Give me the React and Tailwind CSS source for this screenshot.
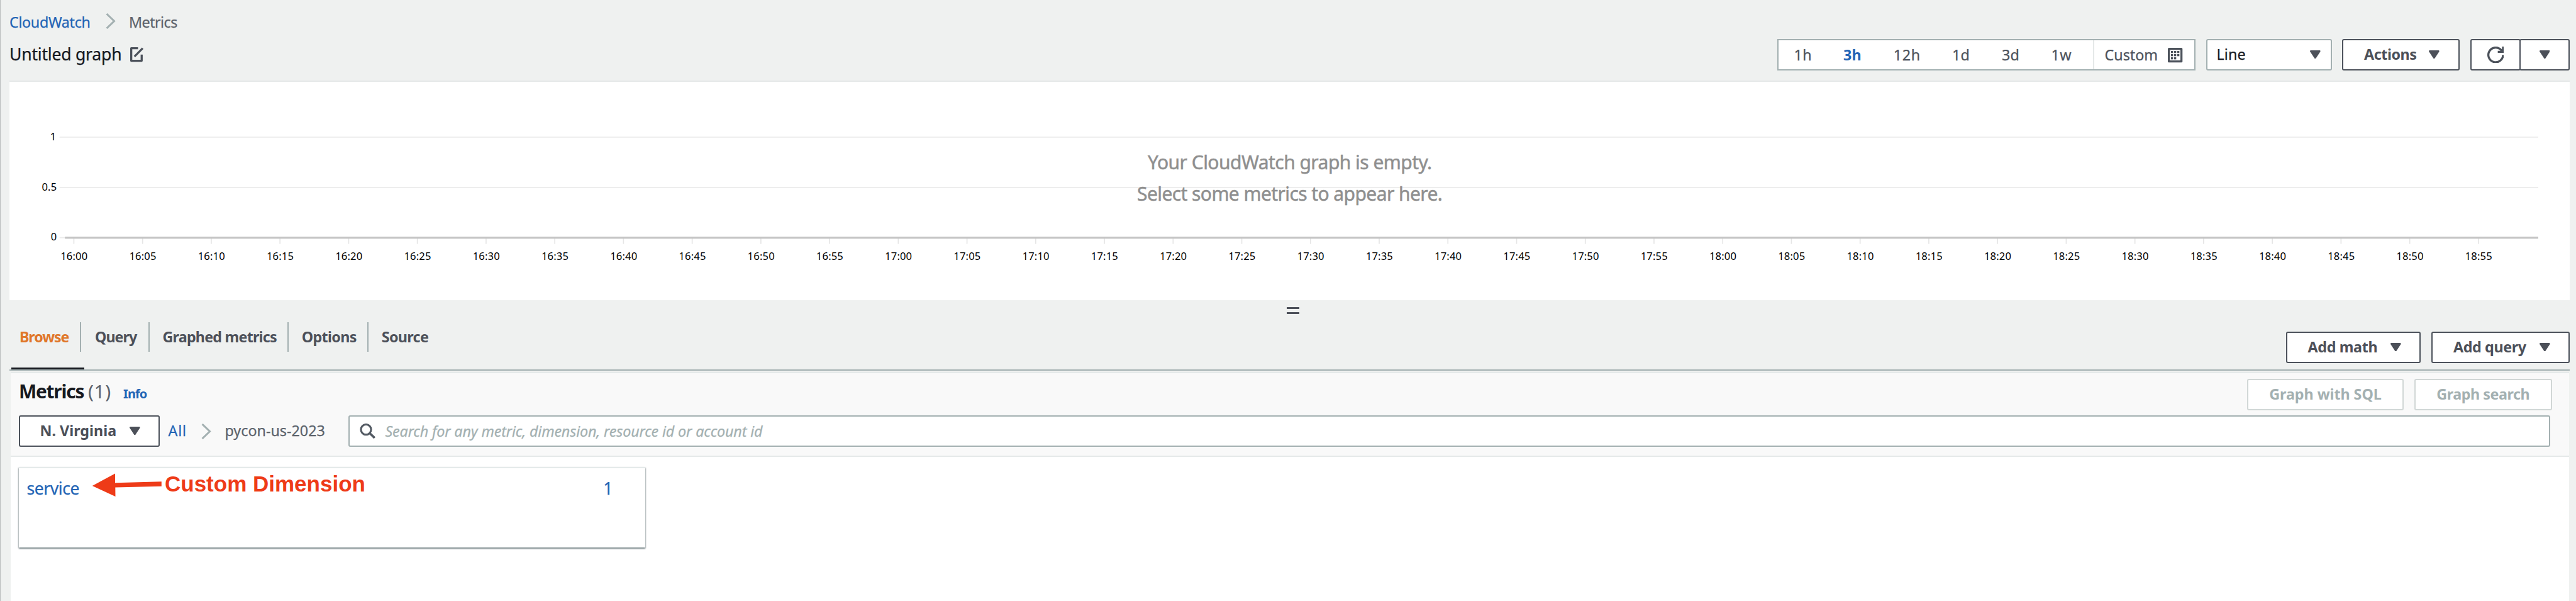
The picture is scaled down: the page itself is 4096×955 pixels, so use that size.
import React from "react";

function Caret() {
  return (
    <svg className="h-[13.3px] w-[16.7px] shrink-0" viewBox="0 0 20 16">
      <path d="M1.5 1.5H18.5L10 14.5Z" fill="#4c5059" stroke="#4c5059" strokeWidth="3" strokeLinejoin="round" />
    </svg>
  );
}

function Chevron() {
  return (
    <svg className="h-[25px] w-[16px] shrink-0" viewBox="0 0 19 30">
      <path d="M1.8 1.2L16.2 15L1.8 28.8" fill="none" stroke="#a3b0b1" strokeWidth="3.6" />
    </svg>
  );
}

function EditIcon() {
  return (
    <svg className="h-[23.3px] w-[21.6px] shrink-0" viewBox="0 0 26 28">
      <path d="M15 2H2V26H22V14M8.2 17.8L24 2" fill="none" stroke="#4c525b" strokeWidth="4" strokeLinejoin="round" />
    </svg>
  );
}

function CalendarIcon() {
  const cells = [[6, 6], [12, 6], [18, 6], [6, 12], [12, 12], [18, 12], [6, 18], [12, 18]];
  return (
    <svg className="size-[23.3px] shrink-0" viewBox="0 0 28 28">
      <rect width="28" height="28" rx="2" fill="#4c525b" />
      <rect x="4" y="4" width="20" height="20" fill="#fff" />
      {cells.map(([x, y]) => (
        <rect key={`${x}-${y}`} x={x} y={y} width="4" height="4" fill="#4c525b" />
      ))}
    </svg>
  );
}

function RefreshIcon() {
  return (
    <svg className="size-[26.6px] shrink-0" viewBox="0 0 32 32">
      <path d="M30 16A14 14 0 1 1 26 6.2L29 9.5M30 0V10H20" fill="none" stroke="#4c525b" strokeWidth="4" />
    </svg>
  );
}

function SearchIcon() {
  return (
    <svg className="h-[24.2px] w-[25px] shrink-0" viewBox="0 0 30 29">
      <circle cx="12" cy="11.5" r="9.7" fill="none" stroke="#545b64" strokeWidth="3.8" />
      <path d="M18.5 18L28.5 27.5" stroke="#545b64" strokeWidth="4.4" />
    </svg>
  );
}

const TICKS = Array.from({ length: 36 }, (_, i) => {
  const minutes = 16 * 60 + i * 5;
  return {
    x: 117.4 + i * 109.24,
    label: `${Math.floor(minutes / 60)}:${String(minutes % 60).padStart(2, "0")}`,
  };
});

function Chart() {
  return (
    <svg className="block h-[347px] w-[4071px]" viewBox="15 130 4071 347">
      <rect x="94.7" y="217.1" width="3941.3" height="1.7" fill="#ebebeb" />
      <rect x="94.7" y="297" width="3941.3" height="1.7" fill="#ebebeb" />
      <rect x="94.7" y="376.8" width="10" height="1.7" fill="#ebebeb" />
      {TICKS.map((t) => (
        <rect key={t.label} x={t.x - 0.8} y="379" width="1.7" height="8.6" fill="#e6e6e6" />
      ))}
      <rect x="103.2" y="376" width="3932.8" height="3.3" fill="#c4c4c4" />
      <g fill="#000" className="text-[16.6px] [-webkit-text-stroke:0.4px_#000]" letterSpacing="0.15">
        <text x="89.5" y="222.8" textAnchor="end">1</text>
        <text x="90.3" y="302.7" textAnchor="end">0.5</text>
        <text x="90.3" y="382.4" textAnchor="end">0</text>
        {TICKS.map((t) => (
          <text key={t.label} x={t.x + 0.4} y="412.6" textAnchor="middle">{t.label}</text>
        ))}
      </g>
      <g fill="#8f8f8f" stroke="#8f8f8f" strokeWidth="0.5" className="text-[30px]">
        <text x="1825" y="268.8" letterSpacing="-0.53">Your CloudWatch graph is empty.</text>
        <text x="1808" y="318.9" letterSpacing="-0.58">Select some metrics to appear here.</text>
      </g>
    </svg>
  );
}

function TopBar() {
  return (
    <header className="h-[128px] [-webkit-text-stroke-width:0.25px] [&_*]:[-webkit-text-stroke-color:currentColor]">
      <nav className="flex h-[62px] items-center pt-[8px] text-[23.3px]">
        <span className="w-[153px] tracking-[-0.32px] text-[#2264b5]">CloudWatch</span>
        <span className="w-[37px] pb-[3px]"><Chevron /></span>
        <span className="tracking-[-0.55px] text-[#5c636c]">Metrics</span>
      </nav>
      <div className="flex h-[50px] items-center justify-between">
        <div className="flex items-center">
          <h1 className="w-[192px] pl-[-1px] text-[26.6px] font-normal tracking-[-0.23px] text-[#16191f]">Untitled graph</h1>
          <EditIcon />
        </div>
        <div className="flex h-[50px]">
          <div className="mr-[17px] flex w-[665px] items-center border-2 border-[#a3b0b1] bg-white pl-[24.5px] text-[23.3px] text-[#4c525b]">
            <span className="w-[78.5px] pt-[1px] tracking-[0.3px]">1h</span>
            <span className="w-[79.7px] pt-[1px] font-bold tracking-[0.27px] text-[#2264b5] [-webkit-text-stroke-width:0px]">3h</span>
            <span className="w-[93.3px] pt-[1px] tracking-[0.7px]">12h</span>
            <span className="w-[79px] pt-[1px] tracking-[0.3px]">1d</span>
            <span className="w-[78.6px] pt-[1px] tracking-[0.3px]">3d</span>
            <span className="w-[66.4px] pt-[1px] tracking-[0.3px]">1w</span>
            <span className="h-full w-[2px] bg-[#e5e8e8]" />
            <span className="w-[117.3px] pl-[16.6px] pt-[1px]">Custom</span>
            <span className="pt-[2px]"><CalendarIcon /></span>
          </div>
          <div className="mr-[16px] flex w-[200px] items-center justify-between rounded-[3px] border-2 border-[#a3b0b1] bg-white pb-[1px] pl-[14.5px] pr-[16.5px] text-[23.3px] text-[#16191f]">
            <span className="tracking-[0.16px]">Line</span>
            <Caret />
          </div>
          <div className="mr-[17px] flex w-[187px] items-center justify-between rounded-[3px] border-2 border-[#4c525b] bg-white pb-[1px] pl-[33px] pr-[30px] text-[23.3px] font-bold text-[#4c5059] [-webkit-text-stroke-width:0px]">
            <span className="tracking-[-0.44px]">Actions</span>
            <Caret />
          </div>
          <div className="-mr-[2px] flex w-[80px] items-center justify-center rounded-[3px] border-2 border-[#4c525b] bg-white">
            <RefreshIcon />
          </div>
          <div className="flex w-[80px] items-center justify-center rounded-[3px] border-2 border-[#4c525b] bg-white">
            <Caret />
          </div>
        </div>
      </div>
    </header>
  );
}

function Tabs() {
  return (
    <div className="flex h-[77px] justify-between border-b-2 border-[#a3b0b1]">
      <div>
        <div className="flex h-[47px] items-center text-[23.3px] font-bold text-[#4c5059]">
          <span className="w-[112px] pb-[1px] pl-[16px] tracking-[-1.12px] text-[#e07628]">Browse</span>
          <span className="h-full w-[2px] bg-[#a3b0b1]" />
          <span className="w-[106.5px] pb-[1px] pl-[22px] tracking-[-1px]">Query</span>
          <span className="h-full w-[2px] bg-[#a3b0b1]" />
          <span className="w-[219px] pb-[1px] pl-[21px] tracking-[-0.78px]">Graphed metrics</span>
          <span className="h-full w-[2px] bg-[#a3b0b1]" />
          <span className="w-[125.5px] pb-[1px] pl-[21.3px] tracking-[-0.67px]">Options</span>
          <span className="h-full w-[2px] bg-[#a3b0b1]" />
          <span className="pb-[1px] pl-[20.8px] tracking-[-0.68px]">Source</span>
        </div>
        <div className="ml-[3px] mt-[25px] h-[3px] w-[116px] bg-[#16191f]" />
      </div>
      <div className="mt-[15px] flex h-[50px] gap-[17px] text-[23.3px] font-bold text-[#4c5059]">
        <div className="flex w-[214.5px] items-center justify-between rounded-[3px] border-2 border-[#4c525b] bg-white pb-[1px] pl-[33px] pr-[29.5px]">
          <span className="tracking-[-0.36px]">Add math</span>
          <Caret />
        </div>
        <div className="flex w-[220px] items-center justify-between rounded-[3px] border-2 border-[#4c525b] bg-white pb-[1px] pl-[33px] pr-[29.5px]">
          <span className="tracking-[-0.39px]">Add query</span>
          <Caret />
        </div>
      </div>
    </div>
  );
}

function MetricsPanel() {
  return (
    <section className="ml-[1.5px] mt-[2px] h-[364px] w-[4068px] bg-white [-webkit-text-stroke-width:0.25px] [&_*]:[-webkit-text-stroke-color:currentColor]">
      <div className="h-[135px] border-y-2 border-[#e5e9e9] bg-[#f9f9f9] pl-[13.5px]">
        <div className="flex h-[67px] justify-between pr-[27px] [-webkit-text-stroke-width:0px]">
          <div className="flex items-baseline">
            <h2 className="w-[110px] text-[29.9px] font-bold leading-[57px] tracking-[-1.22px] text-[#16191f]">Metrics</h2>
            <span className="w-[56px] text-[29.9px] leading-[57px] tracking-[0.6px] text-[#5c636c]">(1)</span>
            <span className="text-[20px] font-bold leading-[20px] tracking-[-0.9px] text-[#2264b5]">Info</span>
          </div>
          <div className="mt-[9px] flex h-[50px] gap-[17px] text-[23.3px] font-bold text-[#a3b0b1]">
            <div className="flex w-[249px] items-center justify-center rounded-[3px] border-2 border-[#d1d7d6] bg-white pb-[1px]">
              <span className="tracking-[-0.05px]">Graph with SQL</span>
            </div>
            <div className="flex w-[218.5px] items-center justify-center rounded-[3px] border-2 border-[#d1d7d6] bg-white pb-[1px]">
              <span className="tracking-[-0.46px]">Graph search</span>
            </div>
          </div>
        </div>
        <div className="flex h-[50px] items-center pr-[30px] text-[23.3px]">
          <div className="mr-[14px] flex h-full w-[223.5px] items-center justify-between rounded-[3px] border-2 border-[#4c525b] bg-white pb-[1px] pl-[31.5px] pr-[29px] font-bold text-[#4c5059] [-webkit-text-stroke-width:0px]">
            <span>N. Virginia</span>
            <Caret />
          </div>
          <span className="w-[52.5px] pb-[1px] tracking-[0.85px] text-[#2264b5]">All</span>
          <Chevron />
          <span className="w-[217.5px] pb-[1px] pl-[21.5px] text-[#5c636c]">pycon-us-2023</span>
          <div className="flex h-full flex-1 items-center rounded-[3px] border-2 border-[#a3b0b1] bg-white pl-[16.5px]">
            <SearchIcon />
            <span className="pl-[15.5px] italic tracking-[-0.14px] text-[#a3b0b1]">Search for any metric, dimension, resource id or account id</span>
          </div>
        </div>
      </div>
      <div className="ml-[13.5px] mt-[16px] flex h-[128px] w-[996px] justify-between border-t-2 border-[#e5eaea] bg-white pl-[12.5px] pr-[51.5px] pt-[12px] text-[26.6px] leading-[40px] text-[#2264b5] shadow-[0_2px_2px_rgba(0,28,36,0.45),1px_1px_2px_rgba(0,28,36,0.2),-1px_1px_2px_rgba(0,28,36,0.2)]">
        <span className="tracking-[-0.49px]">service</span>
        <span>1</span>
      </div>
    </section>
  );
}

export default function App() {
  return (
    <div className="relative h-[955px] w-[4096px] overflow-hidden whitespace-nowrap border-l border-[#b9bdbd] bg-[#eff1f0] pl-[14px] pr-[10px] font-['Noto_Sans',sans-serif]">
      <TopBar />
      <div className="h-[349px] border-t-2 border-[#e5e8e8] bg-white">
        <Chart />
      </div>
      <div className="flex h-[35px] flex-col gap-[5px] pl-[2030.6px] pt-[11px]">
        <span className="h-[3px] w-[20px] bg-[#4c5059]" />
        <span className="h-[3px] w-[20px] bg-[#4c5059]" />
      </div>
      <Tabs />
      <MetricsPanel />
      <svg className="absolute left-[145px] top-[750px] h-[42px] w-[114px]" viewBox="146 750 114 42">
        <path d="M146.8 771.9L183 752.5V767.2L256.8 765.3V772.8L183.3 774.6L183.5 789Z" fill="#ee3b18" />
      </svg>
      <div className="absolute left-[261px] top-[749px] font-['Liberation_Sans',sans-serif] text-[35px] font-bold leading-[40px] text-[#ee3b18]">
        Custom Dimension
      </div>
    </div>
  );
}
